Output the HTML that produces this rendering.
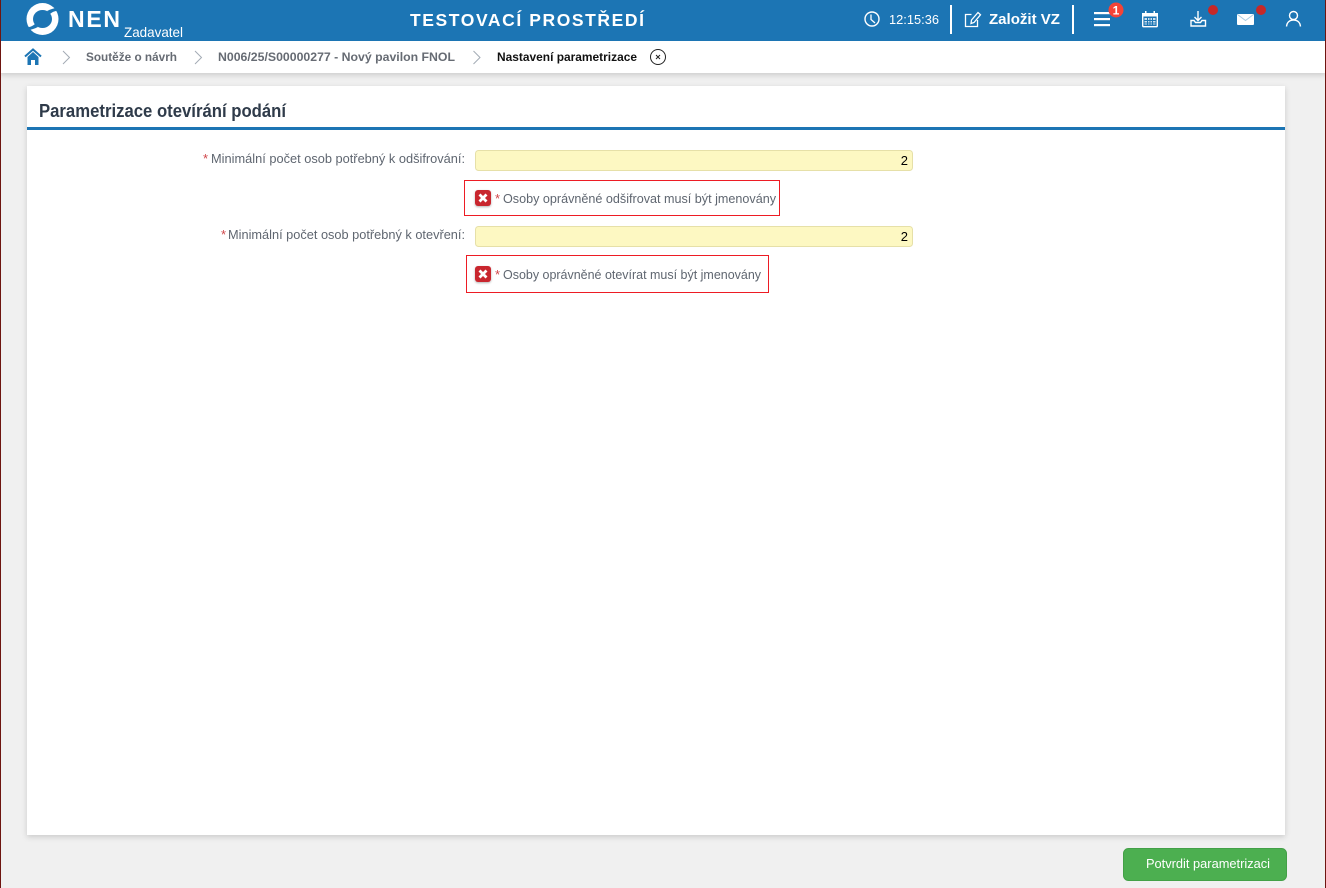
<!DOCTYPE html>
<html lang="cs"><head><meta charset="utf-8"><title>Parametrizace</title>
<style>
html,body{margin:0;padding:0;width:1326px;height:888px;overflow:hidden;background:#f0f0f0}
svg{display:block;position:absolute;left:0;top:0}
text{font-family:"Liberation Sans",sans-serif;white-space:pre}
.b{font-weight:700}
</style></head><body>
<svg width="1326" height="888" viewBox="0 0 1326 888" xmlns="http://www.w3.org/2000/svg">
<defs>
<filter id="s1" x="-5%" y="-50%" width="110%" height="250%"><feDropShadow dx="0" dy="2" stdDeviation="3" flood-color="#000" flood-opacity=".16"/></filter>
<filter id="s2" x="-5%" y="-5%" width="110%" height="110%"><feDropShadow dx="0" dy="2" stdDeviation="3" flood-color="#000" flood-opacity=".16"/></filter>
<filter id="s3" x="-40%" y="-40%" width="180%" height="180%"><feDropShadow dx="0" dy="1" stdDeviation="1" flood-color="#000" flood-opacity=".3"/></filter>
</defs>
<rect width="1326" height="888" fill="#f0f0f0"/>
<rect x="27" y="86" width="1258" height="749" fill="#fff" filter="url(#s2)"/>
<rect x="0" y="41" width="1326" height="32" fill="#fff" filter="url(#s1)"/>
<rect width="1326" height="41" fill="#1c75b4"/>
<rect x="0" y="0" width="1" height="888" fill="#6e1510"/>
<rect x="1325" y="0" width="1" height="888" fill="#6e1510"/>

<!-- logo -->
<circle cx="42.500" cy="19" r="16" fill="#fff"/>
<ellipse cx="42.500" cy="19" rx="9.500" ry="9" fill="#1c75b4"/>
<path d="M47 11C50 9.500 54 8 60 7.500L60 10.500C56 10.500 53 11.500 50 14Z" fill="#1c75b4"/>
<path d="M47 11C50 9.500 54 8 60 7.500L60 10.500C56 10.500 53 11.500 50 14Z" fill="#1c75b4" transform="rotate(180 42.500 19)"/>
<text x="68" y="27" class="b" font-size="23" fill="#fff" textLength="52" lengthAdjust="spacing">NEN</text>
<text x="124" y="37" font-size="14" fill="#fff" textLength="59" lengthAdjust="spacingAndGlyphs">Zadavatel</text>
<text x="410" y="26" class="b" font-size="17.500" fill="#fff" textLength="234" lengthAdjust="spacing">TESTOVACÍ PROSTŘEDÍ</text>

<!-- clock -->
<circle cx="872" cy="19" r="7" fill="none" stroke="#fff" stroke-width="1.400"/>
<path d="M871 14.500V19.500L875 23" fill="none" stroke="#fff" stroke-width="1.300"/>
<text x="889" y="24" font-size="13" fill="#fff" textLength="50" lengthAdjust="spacingAndGlyphs">12:15:36</text>
<rect x="950" y="5" width="2" height="29" fill="#fff"/>
<!-- edit -->
<path d="M971.500 14.500H965.500V26.500H977.500V20" fill="none" stroke="#fff" stroke-width="1.300"/>
<path d="M971 23.500L971.500 20L978 12.500L980.500 14.800L974 22.500Z" fill="none" stroke="#fff" stroke-width="1.300"/>
<text x="989" y="24" class="b" font-size="15" fill="#fff" textLength="71" lengthAdjust="spacingAndGlyphs">Založit VZ</text>
<rect x="1072" y="5" width="2" height="29" fill="#fff"/>
<!-- hamburger -->
<g fill="#fff"><rect x="1094" y="12" width="16" height="2.200"/><rect x="1094" y="18" width="16" height="2.200"/><rect x="1094" y="24" width="16" height="2.200"/></g>
<circle cx="1116" cy="10" r="7.500" fill="#f44336"/>
<text x="1116" y="14.500" class="b" font-size="12" fill="#fff" text-anchor="middle">1</text>
<!-- calendar -->
<rect x="1142.700" y="13.700" width="14.600" height="13" rx="1" fill="#1c75b4" stroke="#fff" stroke-width="1.400"/>
<rect x="1142" y="13" width="16" height="3.500" fill="#fff"/>
<rect x="1145" y="11" width="1.500" height="3.500" fill="#fff"/><rect x="1153.500" y="11" width="1.500" height="3.500" fill="#fff"/>
<rect x="1144.500" y="18" width="11" height="6.500" fill="#cfe2f0"/>
<g fill="#1c75b4"><rect x="1147" y="18" width="1" height="6.500"/><rect x="1149.500" y="18" width="1" height="6.500"/><rect x="1152" y="18" width="1" height="6.500"/><rect x="1144.500" y="20" width="11" height="1"/><rect x="1144.500" y="22.500" width="11" height="1"/></g>
<!-- download -->
<path d="M1198 11V20M1194.500 17L1198 20.500L1201.500 17" fill="none" stroke="#fff" stroke-width="1.400"/>
<path d="M1191 20.500V26H1205.500V20.500H1202L1200.500 22.500H1195.500L1194 20.500Z" fill="none" stroke="#fff" stroke-width="1.400"/>
<circle cx="1213" cy="10" r="5" fill="#c62828"/>
<!-- mail -->
<rect x="1237" y="14" width="17" height="11" rx="1" fill="#fff"/>
<path d="M1237.500 14.500L1245.500 20.500L1253.500 14.500" fill="none" stroke="#a9cbe2" stroke-width=".9"/>
<circle cx="1261" cy="10" r="5" fill="#c62828"/>
<!-- user -->
<circle cx="1293.500" cy="15.500" r="4" fill="none" stroke="#fff" stroke-width="1.400"/>
<path d="M1286.500 26.500C1287 22 1290 20 1293.500 20S1300 22 1300.500 26.500" fill="none" stroke="#fff" stroke-width="1.400"/>

<!-- breadcrumb -->
<path d="M25 56.500L33 49.500L41 56.500" fill="none" stroke="#1c75b4" stroke-width="2"/>
<path d="M27.500 57L33 52L38.500 57V65H35V60H31V65H27.500Z" fill="#1c75b4"/>
<g fill="none" stroke="#a3abb5" stroke-width="1"><path d="M63 51L69.500 57.500L63 64"/><path d="M195 51L201.500 57.500L195 64"/><path d="M473.500 51L480 57.500L473.500 64"/></g>
<text x="86" y="61" class="b" font-size="12" fill="#666b73" textLength="91" lengthAdjust="spacingAndGlyphs">Soutěže o návrh</text>
<text x="218" y="61" class="b" font-size="12" fill="#666b73" textLength="237" lengthAdjust="spacingAndGlyphs">N006/25/S00000277 - Nový pavilon FNOL</text>
<text x="497" y="61" class="b" font-size="12" fill="#111" textLength="140" lengthAdjust="spacingAndGlyphs">Nastavení parametrizace</text>
<circle cx="658" cy="57" r="7.500" fill="none" stroke="#222" stroke-width="1"/>
<path d="M656 55L660 59M660 55L656 59" stroke="#222" stroke-width="1"/>

<!-- panel -->
<text x="39" y="117" class="b" font-size="18" fill="#2f3b4a" textLength="247" lengthAdjust="spacingAndGlyphs">Parametrizace otevírání podání</text>
<rect x="27" y="127" width="1258" height="3" fill="#1c75b4"/>

<text x="203" y="163" font-size="13" fill="#d0464a">*</text>
<text x="211" y="163" font-size="13" fill="#5f6670" textLength="254" lengthAdjust="spacingAndGlyphs">Minimální počet osob potřebný k odšifrování:</text>
<rect x="475.500" y="150.500" width="437" height="20" rx="3" fill="#fdf8c2" stroke="#e6e0a8"/>
<text x="908" y="165" font-size="13" fill="#000" text-anchor="end">2</text>

<rect x="464.500" y="180.500" width="315" height="35" fill="#fff" stroke="#ed1c24"/>
<rect x="475" y="190" width="16" height="16" rx="3" fill="#c9252d" filter="url(#s3)"/>
<path d="M479.500 194.500L486.500 201.500M486.500 194.500L479.500 201.500" stroke="#fff" stroke-width="2.800"/>
<text x="495" y="203" font-size="13" fill="#d0464a">*</text>
<text x="503" y="203" font-size="13" fill="#5f6670" textLength="273" lengthAdjust="spacingAndGlyphs">Osoby oprávněné odšifrovat musí být jmenovány</text>

<text x="221" y="239" font-size="13" fill="#d0464a">*</text>
<text x="228" y="239" font-size="13" fill="#5f6670" textLength="237" lengthAdjust="spacingAndGlyphs">Minimální počet osob potřebný k otevření:</text>
<rect x="475.500" y="226.500" width="437" height="20" rx="3" fill="#fdf8c2" stroke="#e6e0a8"/>
<text x="908" y="241" font-size="13" fill="#000" text-anchor="end">2</text>

<rect x="466.500" y="255.500" width="302" height="37" fill="#fff" stroke="#ed1c24"/>
<rect x="475" y="266" width="16" height="16" rx="3" fill="#c9252d" filter="url(#s3)"/>
<path d="M479.500 270.500L486.500 277.500M486.500 270.500L479.500 277.500" stroke="#fff" stroke-width="2.800"/>
<text x="495" y="279" font-size="13" fill="#d0464a">*</text>
<text x="503" y="279" font-size="13" fill="#5f6670" textLength="258" lengthAdjust="spacingAndGlyphs">Osoby oprávněné otevírat musí být jmenovány</text>

<!-- button -->
<rect x="1123.500" y="848.500" width="163" height="32" rx="5" fill="#4caf50" stroke="#43a047"/>
<text x="1146" y="868" font-size="13" fill="#fff" textLength="124" lengthAdjust="spacingAndGlyphs">Potvrdit parametrizaci</text>
</svg>
</body></html>
